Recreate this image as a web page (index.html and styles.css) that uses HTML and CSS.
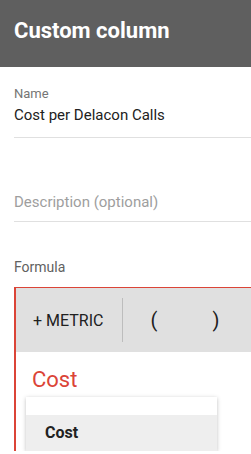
FILE: index.html
```html
<!DOCTYPE html>
<html>
<head>
<meta charset="utf-8">
<title>Custom column</title>
<link rel="stylesheet" href="styles.css">
</head>
<body>
<div class="header">Custom column</div>
<div class="content">
  <div class="field">
    <div class="label">Name</div>
    <div class="value">Cost per Delacon Calls</div>
  </div>
  <div class="field desc">
    <div class="placeholder">Description (optional)</div>
  </div>
  <div class="formula-label">Formula</div>
  <div class="formula">
    <div class="toolbar">
      <span class="metric">+ METRIC</span>
      <span class="sep"></span>
      <span class="paren">(</span>
      <span class="paren">)</span>
    </div>
    <div class="editor">
      <div class="typed">Cost</div>
      <div class="dropdown">
        <div class="blank"></div>
        <div class="item active">Cost</div>
      </div>
    </div>
  </div>
</div>
</body>
</html>
```

FILE: styles.css
```css
body{
margin:0;
font-family:Roboto,"Noto Sans",sans-serif;
background:#fff;
overflow:hidden;
}
.header{
height:67px;
background-color:#5f5f5f;
color:#fff;
font-size:22px;
font-weight:bold;
line-height:62px;
padding-left:14px;
}
.content{
padding-left:14px;
}
.field{
border-bottom:1px solid #e0e0e0;
}
.label{
font-size:13px;
color:#757575;
padding-top:19px;
line-height:15px;
}
.value{
font-size:15px;
color:#212121;
line-height:20px;
padding:4px 0 12px;
}
.desc{
padding-top:54px;
}
.placeholder{
font-size:15px;
color:#9e9e9e;
line-height:20px;
padding:0 0 9px;
}
.formula-label{
font-size:14px;
color:#616161;
padding-top:37px;
line-height:16px;
}
.formula{
margin-top:12px;
border-top:1px solid #db4437;
border-left:2px solid #db4437;
}
.toolbar{
height:64px;
background-color:#e0e0e0;
display:flex;
align-items:center;
}
.metric{
font-size:16px;
color:#212121;
padding-left:17px;
width:89px;
}
.sep{
width:1px;
height:44px;
background-color:#bdbdbd;
}
.paren{
font-size:20px;
color:#212121;
width:62px;
text-align:center;
}
.editor{
padding:15px 0 0 16px;
}
.typed{
font-size:22px;
color:#db4437;
line-height:26px;
}
.dropdown{
margin-top:4px;
margin-left:-6px;
width:191px;
background:#fff;
box-shadow:0 1px 4px rgba(0,0,0,0.25);
}
.blank{
height:18px;
}
.item{
height:36px;
line-height:36px;
padding-left:19px;
font-size:16px;
font-weight:bold;
color:#212121;
}
.item.active{
background-color:#eeeeee;
}
```
